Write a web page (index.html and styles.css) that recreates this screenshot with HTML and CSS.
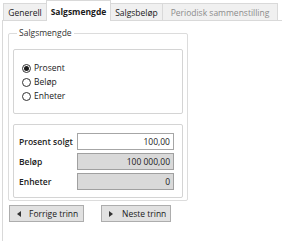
FILE: index.html
```html
<!DOCTYPE html>
<html>
<head>
<meta charset="utf-8">
<link rel="stylesheet" href="styles.css">
</head>
<body>
<div class="tabs">
  <div class="tab tab-generell">Generell</div>
  <div class="tab tab-active">Salgsmengde</div>
  <div class="tab tab-belop">Salgsbeløp</div>
  <div class="tab tab-disabled">Periodisk sammenstilling</div>
</div>
<div class="panel">
  <div class="group">
    <span class="legend">Salgsmengde</span>
    <div class="box radios">
      <label class="radio"><span class="dot checked"></span>Prosent</label>
      <label class="radio"><span class="dot"></span>Beløp</label>
      <label class="radio"><span class="dot"></span>Enheter</label>
    </div>
    <div class="box fields">
      <div class="row"><span class="lbl">Prosent solgt</span><span class="input">100,00</span></div>
      <div class="row"><span class="lbl">Beløp</span><span class="input ro">100 000,00</span></div>
      <div class="row"><span class="lbl">Enheter</span><span class="input ro">0</span></div>
    </div>
  </div>
  <div class="nav">
    <button class="btn btn-prev"><span class="tri tri-left"></span>Forrige trinn</button>
    <button class="btn btn-next"><span class="tri tri-right"></span>Neste trinn</button>
  </div>
</div>
</body>
</html>
```
FILE: styles.css
```css
html, body {
  margin: 0;
  padding: 0;
  background: #fff;
  width: 282px;
  height: 246px;
  overflow: hidden;
  font-family: "Open Sans", "Noto Sans", sans-serif;
  font-size: 8.5px;
  color: #1a1a1a;
}
.tabs {
  display: flex;
  align-items: flex-end;
  height: 20px;
  padding-left: 3px;
}
.tab {
  box-sizing: border-box;
  height: 17px;
  border: 1px solid #d9d9d9;
  border-bottom: none;
  background: #f0f0f0;
  display: flex;
  align-items: center;
  justify-content: center;
  margin-right: -1px;
}
.tab-generell { width: 44px; }
.tab-active {
  width: 65px;
  height: 20px;
  background: #fff;
  font-weight: 700;
  position: relative;
  z-index: 1;
  margin-bottom: -1px;
  height: 21px;
}
.tab-belop { width: 53px; }
.tab-disabled { width: 116px; color: #8c8c8c; }
.panel {
  box-sizing: border-box;
  margin-left: 2px;
  height: 221px;
  border-left: 1px solid #d9d9d9;
  border-top: 1px solid #d9d9d9;
  padding: 12px 0 0 5px;
}
.group {
  position: relative;
  box-sizing: border-box;
  width: 180px;
  height: 168px;
  border: 1px solid #dcdcdc;
  border-radius: 2px;
  padding: 15px 4px 2px 4px;
}
.legend {
  position: absolute;
  top: -7px;
  left: 8px;
  padding: 0 2px;
  background: #fff;
  line-height: 12px;
  color: #333;
}
.box {
  box-sizing: border-box;
  border: 1px solid #d4d4d4;
  border-radius: 2px;
}
.radios {
  height: 65px;
  padding: 11px 0 0 8px;
}
.radio {
  display: flex;
  align-items: center;
  height: 14px;
  line-height: 14px;
}
.dot {
  box-sizing: border-box;
  width: 9px;
  height: 9px;
  border: 1px solid #333;
  border-radius: 50%;
  margin-right: 3px;
  background: #fff;
  display: flex;
  align-items: center;
  justify-content: center;
}
.dot.checked::after {
  content: "";
  width: 5px;
  height: 5px;
  border-radius: 50%;
  background: #1a1a1a;
}
.fields {
  margin-top: 10px;
  height: 74px;
  padding: 8px 8px 0 5px;
  display: flex;
  flex-direction: column;
  gap: 3px;
}
.row {
  display: flex;
  align-items: center;
  height: 17px;
}
.lbl {
  width: 58px;
  font-weight: 600;
  color: #222;
}
.input {
  box-sizing: border-box;
  width: 97px;
  height: 17px;
  border: 1px solid #a6a6a6;
  background: #fff;
  text-align: right;
  padding-right: 3px;
  line-height: 15px;
}
.input.ro {
  background: #d9d9d9;
  border-color: #a0a0a0;
}
.nav {
  display: flex;
  gap: 17px;
  margin-top: 4px;
  padding-left: 1px;
}
.btn {
  box-sizing: border-box;
  height: 17px;
  border: 1px solid #adadad;
  background: #e1e1e1;
  font-family: inherit;
  font-size: 8.5px;
  color: #1a1a1a;
  display: flex;
  align-items: center;
  padding: 0 0 0 7px;
  margin: 0;
}
.btn-prev { width: 75px; }
.btn-next { width: 70px; }
.tri {
  width: 0;
  height: 0;
  border-top: 3.5px solid transparent;
  border-bottom: 3.5px solid transparent;
  margin-right: 8px;
}
.tri-left { border-right: 4px solid #333; }
.tri-right { border-left: 4px solid #333; margin-right: 9px; }
```
